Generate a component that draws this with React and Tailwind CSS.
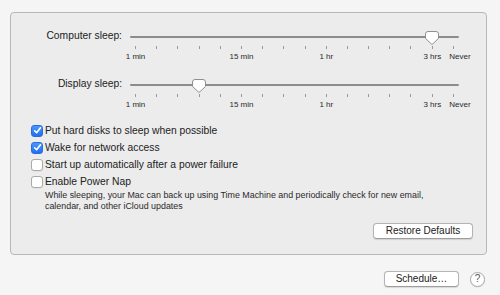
import React from "react";

const TICK0 = 5;
const STEP = 21.2;
const tickX = (i) => TICK0 + i * STEP + 0.5;

const labels = [
  { text: "1 min", x: tickX(0) },
  { text: "15 min", x: tickX(5) },
  { text: "1 hr", x: tickX(9) },
  { text: "3 hrs", x: tickX(14) },
  { text: "Never", x: 330 },
];

function Thumb({ index }) {
  return (
    <svg
      width="14"
      height="14"
      viewBox="0 0 14 14"
      className="absolute top-[2px]"
      style={{ left: tickX(index) - 7 }}
    >
      <path
        d="M3 0.5 H11 Q13.5 0.5 13.5 3 V7.5 L7 13.5 L0.5 7.5 V3 Q0.5 0.5 3 0.5 Z"
        fill="#ffffff"
        stroke="#8f8f8f"
        strokeWidth="1"
      />
    </svg>
  );
}

function SliderRow({ label, index }) {
  return (
    <div className="flex items-start">
      <div className="w-[111px] text-right text-[10.3px] leading-[14px] text-[#222]">
        {label}
      </div>
      <div className="ml-[8px] w-[329px]">
        <div className="relative h-[16px] pt-[7px]">
          <div className="h-[2px] rounded-full bg-[#8c8c8c]" />
          <Thumb index={index} />
        </div>
        <div className="flex h-[4px] items-end justify-between pl-[5px] pr-[5px]">
          {Array.from({ length: 16 }).map((_, i) => (
            <div key={i} className="h-[3px] w-px bg-[#9a9a9a]" />
          ))}
        </div>
        <div className="relative mt-[3px] h-[10px] text-[8px] leading-[10px] text-[#2a2a2a]">
          {labels.map((l) => (
            <span
              key={l.text}
              className="absolute top-0 -translate-x-1/2 whitespace-nowrap"
              style={{ left: l.x }}
            >
              {l.text}
            </span>
          ))}
        </div>
      </div>
    </div>
  );
}

function Checkbox({ checked, label }) {
  return (
    <div className="flex h-[17px] items-center">
      {checked ? (
        <div className="flex h-[12px] w-[12px] items-center justify-center rounded-[3px] border border-[#2a6be0] bg-gradient-to-b from-[#4a98fb] to-[#1e6ff0]">
          <svg width="9" height="9" viewBox="0 0 9 9">
            <path
              d="M1.6 4.8 L3.6 6.8 L7.5 1.8"
              fill="none"
              stroke="#ffffff"
              strokeWidth="1.6"
              strokeLinecap="round"
              strokeLinejoin="round"
            />
          </svg>
        </div>
      ) : (
        <div className="h-[12px] w-[12px] rounded-[3px] border border-[#a9a9a9] bg-white shadow-[0_0.5px_0.5px_rgba(0,0,0,0.08)]" />
      )}
      <span className="ml-[2px] text-[10.3px] text-[#222]">{label}</span>
    </div>
  );
}

function MacButton({ children, className }) {
  return (
    <div
      className={
        "flex h-[16px] items-center justify-center rounded-[4px] border border-[#b4b4b4] border-b-[#9d9d9d] bg-white text-[10px] leading-none text-[#222] shadow-[0_0.5px_1px_rgba(0,0,0,0.12)] " +
        className
      }
    >
      {children}
    </div>
  );
}

export default function App() {
  return (
    <div
      className="h-[295px] w-[500px] overflow-hidden bg-[#f5f5f5] pl-[10px] pt-[12px]"
      style={{ fontFamily: '"Liberation Sans", Arial, sans-serif' }}
    >
      <div className="h-[243px] w-[477px] rounded-[4px] border border-[#b8b8b8] bg-[#ececec]">
        <div className="pt-[16px]">
          <SliderRow label="Computer sleep:" index={14} />
          <div className="mt-[15px]">
            <SliderRow label="Display sleep:" index={3} />
          </div>
          <div className="ml-[20px] mt-[12px]">
            <Checkbox checked label="Put hard disks to sleep when possible" />
            <Checkbox checked label="Wake for network access" />
            <Checkbox label="Start up automatically after a power failure" />
            <Checkbox label="Enable Power Nap" />
          </div>
          <div className="ml-[34px] text-[8.9px] leading-[11px] text-[#2a2a2a]">
            <div>
              While sleeping, your Mac can back up using Time Machine and
              periodically check for new email,
            </div>
            <div>calendar, and other iCloud updates</div>
          </div>
          <div className="mt-[11px] flex justify-end pr-[13px]">
            <MacButton className="w-[100px]">Restore Defaults</MacButton>
          </div>
        </div>
      </div>
      <div className="mt-[16px] flex items-center justify-end pr-[15px]">
        <MacButton className="w-[75px] text-[9.8px]">Schedule…</MacButton>
        <div className="ml-[11px] flex h-[15px] w-[15px] items-center justify-center rounded-full border border-[#a8a8a8] bg-white text-[10px] leading-none text-[#555] shadow-[0_0.5px_1px_rgba(0,0,0,0.1)]">
          ?
        </div>
      </div>
    </div>
  );
}
